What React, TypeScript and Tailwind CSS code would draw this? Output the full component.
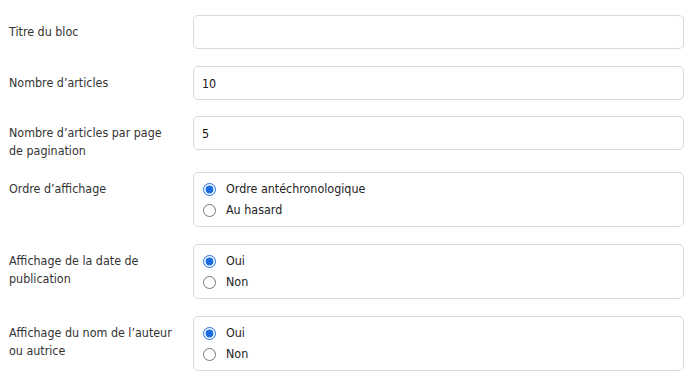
import { ReactNode } from "react";

const font = { fontFamily: 'Tahoma, "DejaVu Sans Condensed", "DejaVu Sans", sans-serif' };

function Row({ label, children, className = "" }: { label: ReactNode; children: ReactNode; className?: string }) {
  return (
    <div className={`flex items-start ${className}`}>
      <div className="w-[193px] shrink-0 pl-[9px] pr-[20px] pt-[8px] text-[12.4px] leading-[18px] text-[#333]">{label}</div>
      <div className="flex-1">{children}</div>
    </div>
  );
}

function TextInput({ value }: { value: string }) {
  return (
    <input
      type="text"
      defaultValue={value}
      className="block w-full h-[34px] rounded-[5px] border border-[#d9d9d9] bg-white px-[8px] text-[12.4px] text-[#111] outline-none"
      style={font}
    />
  );
}

function RadioGroup({ name, options, checked }: { name: string; options: string[]; checked: number }) {
  return (
    <div className="rounded-[5px] border border-[#d9d9d9] bg-white pl-[9px] pt-[6px] pb-[5px]">
      {options.map((opt, i) => (
        <label key={opt} className="flex items-center h-[21px] text-[12.4px] text-[#222]">
          <input
            type="radio"
            name={name}
            defaultChecked={i === checked}
            className="m-0 w-[13px] h-[13px] accent-[#1a6ee0]"
          />
          <span className="ml-[10px]">{opt}</span>
        </label>
      ))}
    </div>
  );
}

export default function App() {
  return (
    <div className="w-[700px] h-[392px] bg-white pt-[15px] pr-[16px] overflow-hidden" style={font}>
      <Row label="Titre du bloc" className="mb-[17px]">
        <TextInput value="" />
      </Row>
      <Row label="Nombre d’articles" className="mb-[16px]">
        <TextInput value="10" />
      </Row>
      <Row label="Nombre d’articles par page de pagination" className="mb-[12px]">
        <TextInput value="5" />
      </Row>
      <Row label="Ordre d’affichage" className="mb-[17px]">
        <RadioGroup name="ordre" options={["Ordre antéchronologique", "Au hasard"]} checked={0} />
      </Row>
      <Row label="Affichage de la date de publication" className="mb-[17px]">
        <RadioGroup name="date" options={["Oui", "Non"]} checked={0} />
      </Row>
      <Row label="Affichage du nom de l’auteur ou autrice">
        <RadioGroup name="auteur" options={["Oui", "Non"]} checked={0} />
      </Row>
    </div>
  );
}
